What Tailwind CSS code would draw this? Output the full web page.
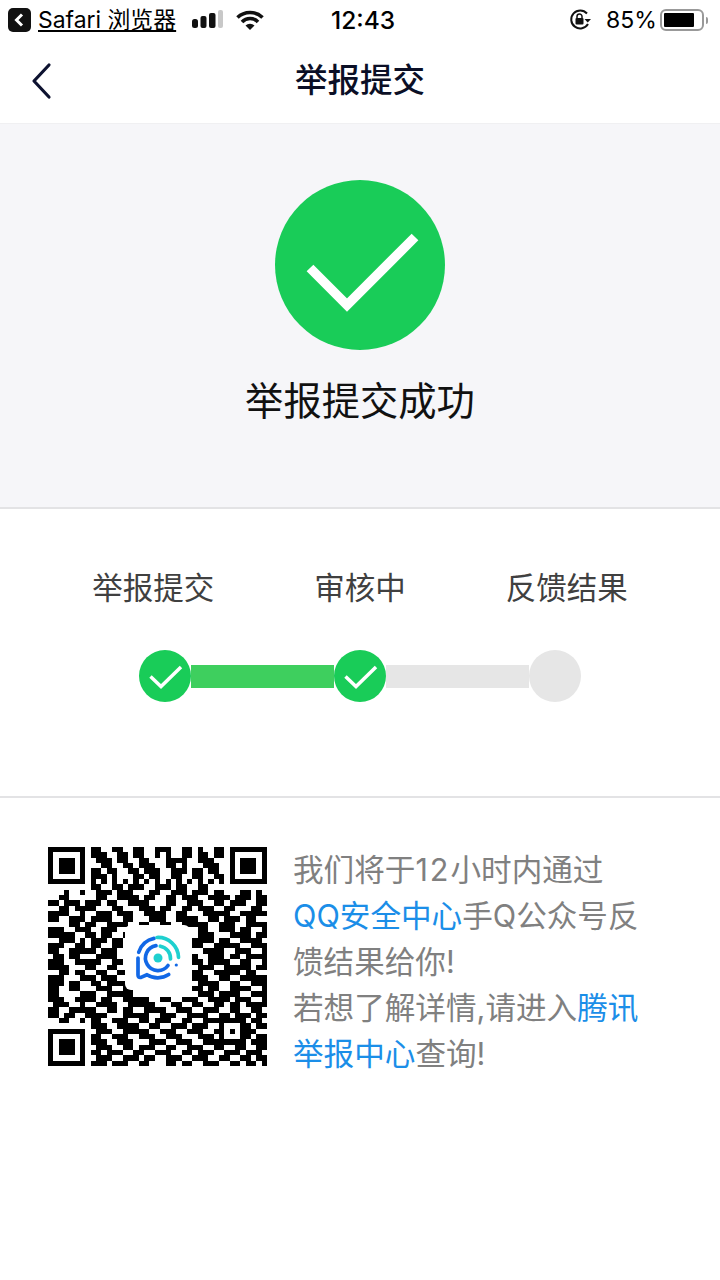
<!DOCTYPE html>
<html lang="zh-CN">
<head>
    <meta charset="UTF-8">
    <meta name="viewport" content="width=device-width, initial-scale=1.0">
    <title>举报提交</title>
    <script src="https://cdn.jsdelivr.net/npm/@tailwindcss/browser@4"></script>
</head>
<body class="bg-white w-[720px] h-[1280px] overflow-hidden [font-family:Inter,'Noto_Sans_CJK_SC',sans-serif]">
    <!-- status bar -->
    <div class="h-10 flex items-center text-black">
        <svg class="ml-2 w-[23px] h-6" viewBox="0 0 23 24"><rect width="23" height="24" rx="5" fill="#111"/><path d="M14 6.500 8.500 12l5.500 5.500" fill="none" stroke="#fff" stroke-width="3"/></svg>
        <span class="ml-[7px] text-[22.900px] leading-7 underline underline-offset-2 w-[154px] whitespace-nowrap">Safari 浏览器</span>
        <svg class="w-8 h-5" viewBox="0 0 32 20"><rect x="0" y="9" width="6" height="9" rx="2.500" fill="#111"/><rect x="8.500" y="6" width="6" height="12" rx="2" fill="#111"/><rect x="17" y="3" width="6.500" height="15" rx="2" fill="#111"/><rect x="26" y="0" width="5" height="18" rx="2" fill="#c8c8c8"/></svg>
        <svg class="ml-3 w-7 h-5" viewBox="0 0 28 20"><path d="M1.500 7.500a18 18 0 0 1 25 0M6 12a11 11 0 0 1 16 0" fill="none" stroke="#111" stroke-width="3.600"/><path d="M9.500 15.500a6.500 6.500 0 0 1 9 0L14 20z" fill="#111"/></svg>
        <span class="ml-[67px] text-[24.500px] font-medium w-[238px] whitespace-nowrap">12:43</span>
        <svg class="w-[23px] h-[22px]" viewBox="0 0 23 22"><path d="M18 4.500A9 9 0 1 0 19 15" fill="none" stroke="#111" stroke-width="2"/><path d="m15.500 10 3.200 3.500 3.300-3.500z" fill="#111"/><rect x="6.500" y="9" width="8" height="6.500" rx="1" fill="#111"/><path d="M8 9V7.500a2.500 2.500 0 0 1 5 0V9" fill="none" stroke="#111" stroke-width="1.500"/></svg>
        <span class="ml-[14px] text-[23px] w-[54px] whitespace-nowrap">85%</span>
        <div class="w-11 h-[22px] border-2 border-[#999] rounded-[6px] p-[2px] pr-2"><div class="w-full h-full bg-black rounded-[1px]"></div></div>
        <div class="ml-[2px] w-[2px] h-[7px] bg-[#999] rounded-r-sm"></div>
    </div>

    <!-- nav -->
    <div class="relative h-[84px] flex items-center justify-center border-b border-[#f0f0f2]">
        <svg class="absolute left-[31px] top-[22px] w-6 h-[38px]" viewBox="0 0 24 38"><path d="M18 3 3 19l15 16" fill="none" stroke="#0d1230" stroke-width="3.200" stroke-linecap="round" stroke-linejoin="round"/></svg>
        <h1 class="text-[32.500px] font-medium text-[#0b0f26] leading-none">举报提交</h1>
    </div>

    <!-- result -->
    <div class="h-[385px] bg-[#f6f6f9] border-b-2 border-[#e3e3e5] flex flex-col items-center pt-[56px]">
        <div class="w-[170px] h-[170px] rounded-full bg-[#19cc58] flex items-center justify-center">
            <svg class="w-[170px] h-[170px]" viewBox="0 0 170 170"><path d="M35 88 72 125 140 57" fill="none" stroke="#fff" stroke-width="9.500"/></svg>
        </div>
        <p class="mt-[28px] text-[38.300px] leading-[46px] text-[#111]">举报提交成功</p>
    </div>

    <!-- steps -->
    <div class="h-[289px] border-b-2 border-[#e3e3e5] pt-[59px]">
        <div class="grid grid-cols-3 px-[50px] text-center text-[30.500px] leading-10 text-[#404040]">
            <span>举报提交</span>
            <span>审核中</span>
            <span>反馈结果</span>
        </div>
        <div class="mt-[42px] w-[442px] mx-auto flex items-center">
            <div class="w-[52px] h-[52px] rounded-full bg-[#19cc58] shrink-0 flex items-center justify-center">
                <svg class="w-[52px] h-[52px]" viewBox="0 0 52 52"><path d="M11.500 26.500 22 36.500 42 17" fill="none" stroke="#fff" stroke-width="3.500"/></svg>
            </div>
            <div class="flex-1 h-[23px] bg-[#3ecf5e]"></div>
            <div class="w-[52px] h-[52px] rounded-full bg-[#19cc58] shrink-0 flex items-center justify-center">
                <svg class="w-[52px] h-[52px]" viewBox="0 0 52 52"><path d="M11.500 26.500 22 36.500 42 17" fill="none" stroke="#fff" stroke-width="3.500"/></svg>
            </div>
            <div class="flex-1 h-[23px] bg-[#e6e6e6]"></div>
            <div class="w-[52px] h-[52px] rounded-full bg-[#e6e6e6] shrink-0"></div>
        </div>
    </div>

    <!-- qr + tip -->
    <div class="flex pl-[48px] pt-[49px]">
        <div class="relative w-[219px] h-[219px] shrink-0">
            <svg id="qr" class="w-[219px] h-[219px]" viewBox="0 0 41 41" shape-rendering="crispEdges"></svg>
            <div class="absolute left-[77px] top-[78px] w-[65px] h-[65px] bg-white rounded-md flex items-center justify-center">
                <svg class="w-[50px] h-[50px]" viewBox="-25 -25 50 50" fill="none" stroke-width="3.700" stroke-linecap="round" stroke-linejoin="round">
                    <circle r="4.500" fill="#1fd0cf"/>
                    <circle cx="18.300" cy="7" r="1.600" fill="#1268e6"/>
                    <path d="M-4-19.600A20 20 0 0 0-19.300-5.700" stroke="#1268e6"/>
                    <path d="M-20 0V17Q-20 20-17 19.400L-11 16.700A20 20 0 0 0 10.700 16.500" stroke="#1268e6"/>
                    <path d="M-1-20.500A20.500 20.500 0 0 1 20.500-.700" stroke="#1fd0cf"/>
                    <path d="M-2-12.300A12.500 12.500 0 1 0 10 7.500" stroke="#1268e6"/>
                    <path d="M2.300-11.800A12.500 12.500 0 0 1 12.500 1" stroke="#1fd0cf"/>
                </svg>
            </div>
        </div>
        <p class="ml-[26px] text-[30.600px] leading-[46px] text-[#808080] whitespace-nowrap">
            我们将于<span class="tracking-[2px]">12</span>小时内通过<br>
            <span class="text-[#1b8ee8]">QQ安全中心</span>手Q公众号反<br>
            馈结果给你!<br>
            若想了解详情,请进入<span class="text-[#1b8ee8]">腾讯</span><br>
            <span class="text-[#1b8ee8]">举报中心</span>查询!
        </p>
    </div>

    <script>
        // qr modules, one string per row (spaces only to keep the columns readable)
        const rows = [
            '1111111 0110011001 1001110011 0100110 1111111',
            '1000001 0111001101 1001010011 0110110 1000001',
            '1011101 0011101100 1100011110 0111000 1011101',
            '1011101 0001100110 1110011010 0011100 1011101',
            '1011101 0110110011 0111001110 1101100 1011101',
            '1000001 0111010001 1011001100 1100110 1000001',
            '1111111 0101010101 0101010101 0101010 1111111',
            '0000000 0110011011 1001110110 0110000 0000000',
            '0001001 0011101110 0011001110 1110110 0011010',
            '0011000 0011001111 0110011011 1001111 0111011',
            '1101110 1110110011 1100011001 1100110 1110011',
            '0011011 1100011000 1110110011 0111001 1000110',
            '1111001 0011101110 0111100110 0011111 0011111',
            '1100111 0111100110 0011100111 1001101 1101100',
            '0000110 1100111100 1100110011 1110011 1001111',
            '1110011 1001110011 0000000000 0110011 1011001',
            '1111100 1101100110 0000000000 0111000 1111011',
            '0011101 0111011000 0000000000 1111011 0011110',
            '1110011 0110011000 0000000000 1100111 1100111',
            '1100111 1101110000 0000000000 0011110 0111001',
            '0110110 0011110000 0000000000 1001110 1101111',
            '1110011 1110011000 0000000000 1101111 0011001',
            '1111000 1100110000 0000000000 0111001 1111011',
            '0011011 0011001100 0000000000 1100111 1101100',
            '1110001 1101110000 0000000000 1110011 0011111',
            '1110110 0110111100 0000000000 0111100 1100111',
            '1100110 0011100110 0000000000 1101100 1111001',
            '1100001 1100111110 0000000000 0111011 1100111',
            '1110011 1101100111 1100110011 1001111 0111001',
            '0111001 0011110011 1110001100 1100110 1101111',
            '1100111 1100110110 0111100111 0011100 1100110',
            '1101100 1111000111 1100111001 1110011 0111011',
            '0011001 0110011100 1101110011 0011111 1110110',
            '0000000 0111001111 0011001110 1110010 0011011',
            '1111111 0011100111 1100111001 1100110 1011100',
            '1000001 0110011100 1110011100 0111010 0011011',
            '1011101 0111001110 0011100111 0011111 1110111',
            '1011101 0011100110 1110011001 1100110 0110011',
            '1011101 0110111001 1001110011 0111001 1101110',
            '1000001 0011100111 0110011100 1110011 0011011',
            '1111111 0111011100 1100011011 0011100 1101101'
        ];
        let d = '';
        rows.forEach((row, y) => {
            [...row.replace(/ /g, '')].forEach((cell, x) => {
                if (cell === '1') d += `M${x} ${y}h1v1h-1z`;
            });
        });
        document.getElementById('qr').innerHTML = `<path d="${d}" fill="#000"/>`;
    </script>
</body>
</html>
